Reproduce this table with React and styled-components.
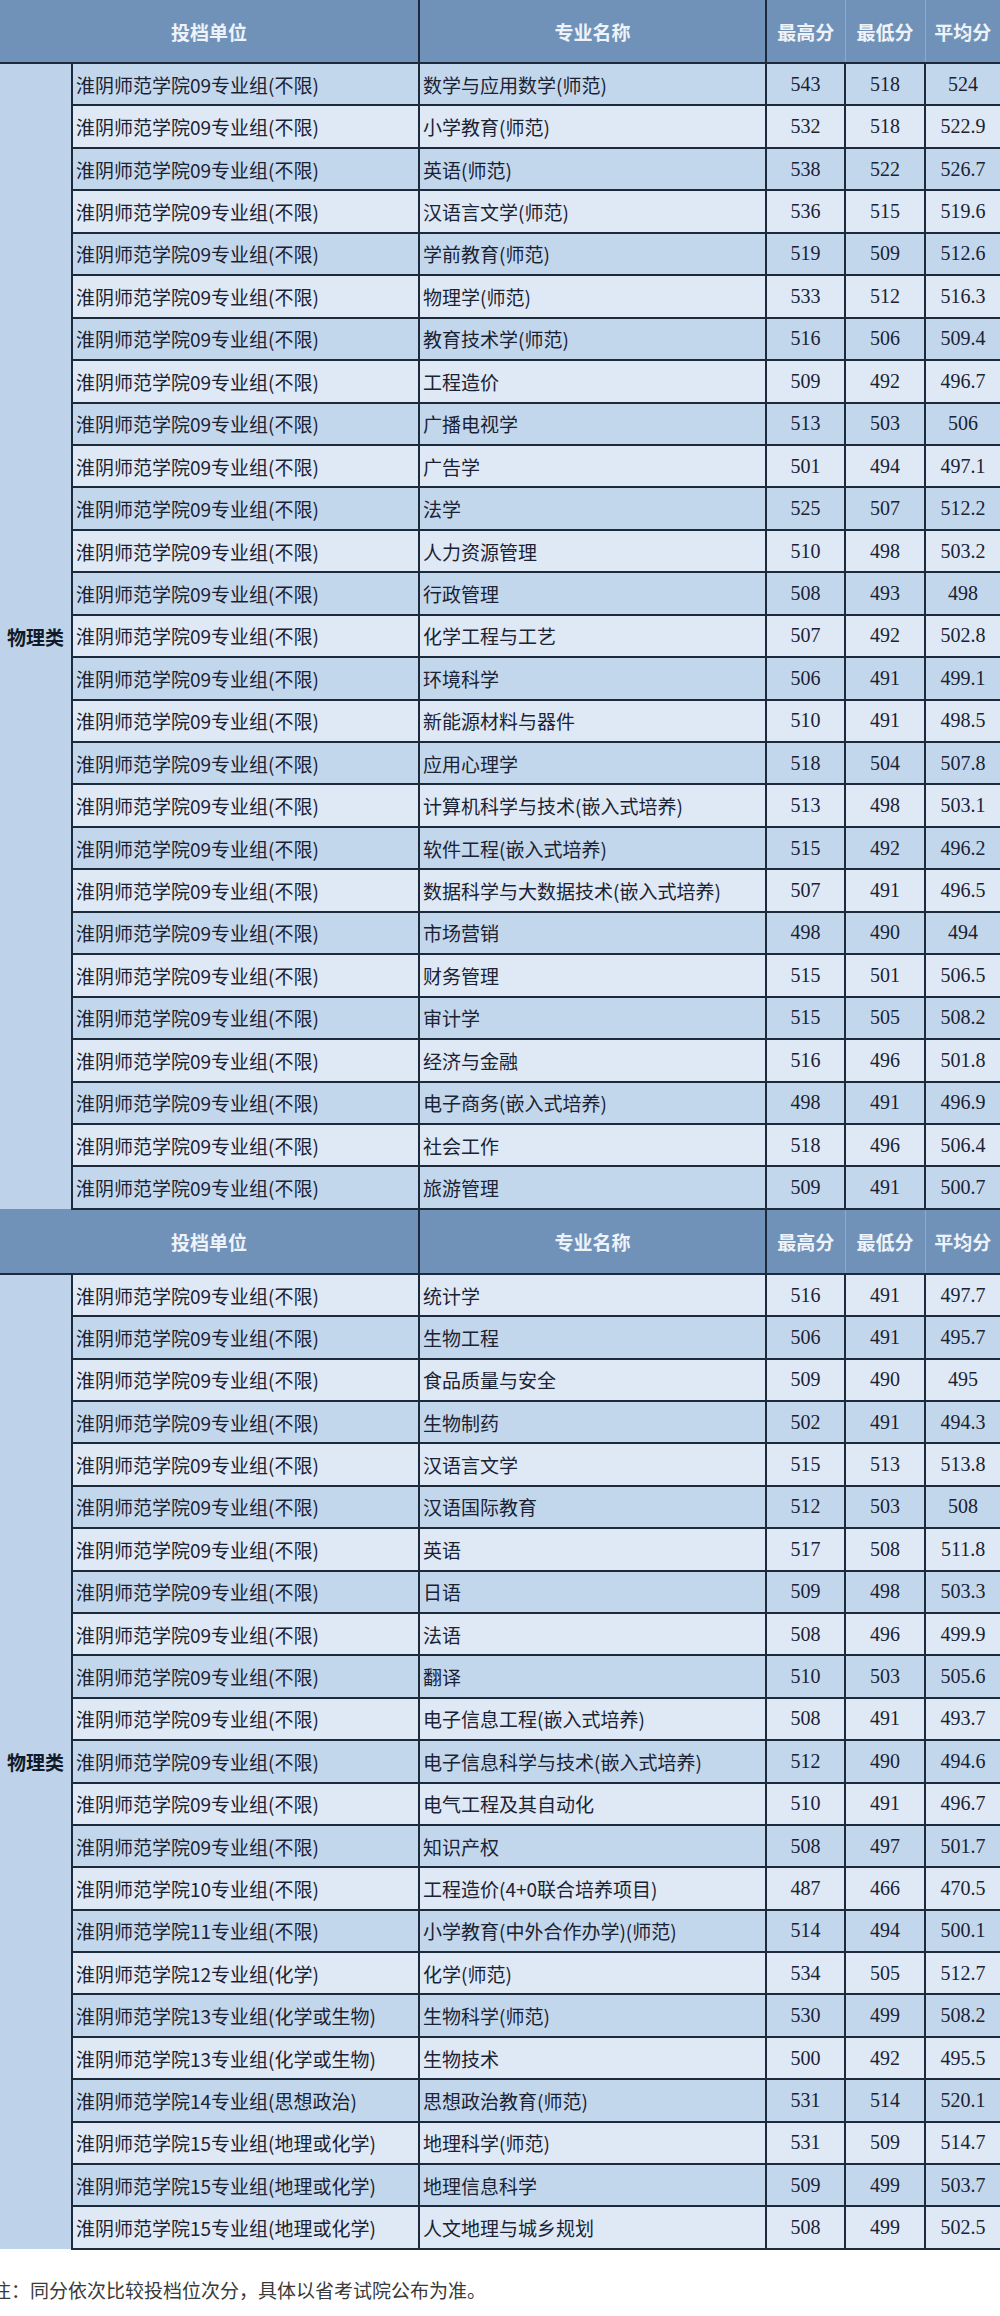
import React from 'react'
import styled, { createGlobalStyle } from 'styled-components'

const GlobalStyle = createGlobalStyle`
  html, body {
    margin: 0;
    padding: 0;
    background: #ffffff;
  }
  body {
    font-family: "Noto Sans CJK SC", "Noto Sans", sans-serif;
  }
`

const Page = styled.div`
  width: 1000px;
  overflow: hidden;
`

const Table = styled.table`
  width: 1000px;
  border-collapse: collapse;
  table-layout: fixed;
`

const HeadCell = styled.th`
  height: ${p => p.$h}px;
  padding: 0;
  background: #7092b9;
  color: #eef3f9;
  font-size: 19px;
  font-weight: 700;
  text-align: center;
  vertical-align: middle;
  border-left: ${p => (p.$dark ? '2px solid #1d2a3b' : '1px solid #8fa9c8')};
  border-bottom: 2px solid #1d2a3b;
  &:first-child {
    border-left: none;
  }
`

const CategoryCell = styled.td`
  padding: 0;
  background: #bed3ea;
  color: #111a28;
  font-size: 19px;
  font-weight: 700;
  text-align: center;
  vertical-align: middle;
  border-right: 2px solid #1d2a3b;
`

const Row = styled.tr`
  height: ${p => p.$h}px;
  background: ${p => (p.$dark ? '#c3d7ec' : '#dfe9f5')};
`

const TextCell = styled.td`
  padding: 0 0 0 3px;
  font-size: 19px;
  color: #1a2233;
  white-space: nowrap;
  overflow: hidden;
  border: 2px solid #1d2a3b;
  border-right-width: 2px;
`

const NumCell = styled.td`
  padding: 0;
  font-family: "Liberation Serif", serif;
  font-size: 20px;
  color: #1a2233;
  text-align: center;
  border: 2px solid #1d2a3b;
  &:last-child {
    border-right: none;
  }
`

const Note = styled.p`
  margin: 26px 0 0 -8px;
  font-size: 19px;
  color: #3a3a3a;
  white-space: nowrap;
`

const S1 = [
  ['淮阴师范学院09专业组(不限)', '数学与应用数学(师范)', '543', '518', '524'],
  ['淮阴师范学院09专业组(不限)', '小学教育(师范)', '532', '518', '522.9'],
  ['淮阴师范学院09专业组(不限)', '英语(师范)', '538', '522', '526.7'],
  ['淮阴师范学院09专业组(不限)', '汉语言文学(师范)', '536', '515', '519.6'],
  ['淮阴师范学院09专业组(不限)', '学前教育(师范)', '519', '509', '512.6'],
  ['淮阴师范学院09专业组(不限)', '物理学(师范)', '533', '512', '516.3'],
  ['淮阴师范学院09专业组(不限)', '教育技术学(师范)', '516', '506', '509.4'],
  ['淮阴师范学院09专业组(不限)', '工程造价', '509', '492', '496.7'],
  ['淮阴师范学院09专业组(不限)', '广播电视学', '513', '503', '506'],
  ['淮阴师范学院09专业组(不限)', '广告学', '501', '494', '497.1'],
  ['淮阴师范学院09专业组(不限)', '法学', '525', '507', '512.2'],
  ['淮阴师范学院09专业组(不限)', '人力资源管理', '510', '498', '503.2'],
  ['淮阴师范学院09专业组(不限)', '行政管理', '508', '493', '498'],
  ['淮阴师范学院09专业组(不限)', '化学工程与工艺', '507', '492', '502.8'],
  ['淮阴师范学院09专业组(不限)', '环境科学', '506', '491', '499.1'],
  ['淮阴师范学院09专业组(不限)', '新能源材料与器件', '510', '491', '498.5'],
  ['淮阴师范学院09专业组(不限)', '应用心理学', '518', '504', '507.8'],
  ['淮阴师范学院09专业组(不限)', '计算机科学与技术(嵌入式培养)', '513', '498', '503.1'],
  ['淮阴师范学院09专业组(不限)', '软件工程(嵌入式培养)', '515', '492', '496.2'],
  ['淮阴师范学院09专业组(不限)', '数据科学与大数据技术(嵌入式培养)', '507', '491', '496.5'],
  ['淮阴师范学院09专业组(不限)', '市场营销', '498', '490', '494'],
  ['淮阴师范学院09专业组(不限)', '财务管理', '515', '501', '506.5'],
  ['淮阴师范学院09专业组(不限)', '审计学', '515', '505', '508.2'],
  ['淮阴师范学院09专业组(不限)', '经济与金融', '516', '496', '501.8'],
  ['淮阴师范学院09专业组(不限)', '电子商务(嵌入式培养)', '498', '491', '496.9'],
  ['淮阴师范学院09专业组(不限)', '社会工作', '518', '496', '506.4'],
  ['淮阴师范学院09专业组(不限)', '旅游管理', '509', '491', '500.7'],
]

const S2 = [
  ['淮阴师范学院09专业组(不限)', '统计学', '516', '491', '497.7'],
  ['淮阴师范学院09专业组(不限)', '生物工程', '506', '491', '495.7'],
  ['淮阴师范学院09专业组(不限)', '食品质量与安全', '509', '490', '495'],
  ['淮阴师范学院09专业组(不限)', '生物制药', '502', '491', '494.3'],
  ['淮阴师范学院09专业组(不限)', '汉语言文学', '515', '513', '513.8'],
  ['淮阴师范学院09专业组(不限)', '汉语国际教育', '512', '503', '508'],
  ['淮阴师范学院09专业组(不限)', '英语', '517', '508', '511.8'],
  ['淮阴师范学院09专业组(不限)', '日语', '509', '498', '503.3'],
  ['淮阴师范学院09专业组(不限)', '法语', '508', '496', '499.9'],
  ['淮阴师范学院09专业组(不限)', '翻译', '510', '503', '505.6'],
  ['淮阴师范学院09专业组(不限)', '电子信息工程(嵌入式培养)', '508', '491', '493.7'],
  ['淮阴师范学院09专业组(不限)', '电子信息科学与技术(嵌入式培养)', '512', '490', '494.6'],
  ['淮阴师范学院09专业组(不限)', '电气工程及其自动化', '510', '491', '496.7'],
  ['淮阴师范学院09专业组(不限)', '知识产权', '508', '497', '501.7'],
  ['淮阴师范学院10专业组(不限)', '工程造价(4+0联合培养项目)', '487', '466', '470.5'],
  ['淮阴师范学院11专业组(不限)', '小学教育(中外合作办学)(师范)', '514', '494', '500.1'],
  ['淮阴师范学院12专业组(化学)', '化学(师范)', '534', '505', '512.7'],
  ['淮阴师范学院13专业组(化学或生物)', '生物科学(师范)', '530', '499', '508.2'],
  ['淮阴师范学院13专业组(化学或生物)', '生物技术', '500', '492', '495.5'],
  ['淮阴师范学院14专业组(思想政治)', '思想政治教育(师范)', '531', '514', '520.1'],
  ['淮阴师范学院15专业组(地理或化学)', '地理科学(师范)', '531', '509', '514.7'],
  ['淮阴师范学院15专业组(地理或化学)', '地理信息科学', '509', '499', '503.7'],
  ['淮阴师范学院15专业组(地理或化学)', '人文地理与城乡规划', '508', '499', '502.5'],
]

function Section({ rows, headH, rowH, firstDark }) {
  return (
    <>
      <tr>
        <HeadCell $h={headH} colSpan={2}>投档单位</HeadCell>
        <HeadCell $h={headH} $dark>专业名称</HeadCell>
        <HeadCell $h={headH} $dark>最高分</HeadCell>
        <HeadCell $h={headH}>最低分</HeadCell>
        <HeadCell $h={headH}>平均分</HeadCell>
      </tr>
      {rows.map((r, i) => (
        <Row key={i} $h={rowH} $dark={(i % 2 === 0) === firstDark}>
          {i === 0 && <CategoryCell rowSpan={rows.length}>物理类</CategoryCell>}
          <TextCell>{r[0]}</TextCell>
          <TextCell>{r[1]}</TextCell>
          <NumCell>{r[2]}</NumCell>
          <NumCell>{r[3]}</NumCell>
          <NumCell>{r[4]}</NumCell>
        </Row>
      ))}
    </>
  )
}

export default function App() {
  return (
    <Page>
      <GlobalStyle />
      <Table>
        <colgroup>
          <col style={{ width: 72 }} />
          <col style={{ width: 347 }} />
          <col style={{ width: 347 }} />
          <col style={{ width: 79 }} />
          <col style={{ width: 80 }} />
          <col style={{ width: 75 }} />
        </colgroup>
        <tbody>
          <Section rows={S1} headH={62} rowH={42.45} firstDark />
          <Section rows={S2} headH={63} rowH={42.4} firstDark={false} />
        </tbody>
      </Table>
      <Note>注：同分依次比较投档位次分，具体以省考试院公布为准。</Note>
    </Page>
  )
}
